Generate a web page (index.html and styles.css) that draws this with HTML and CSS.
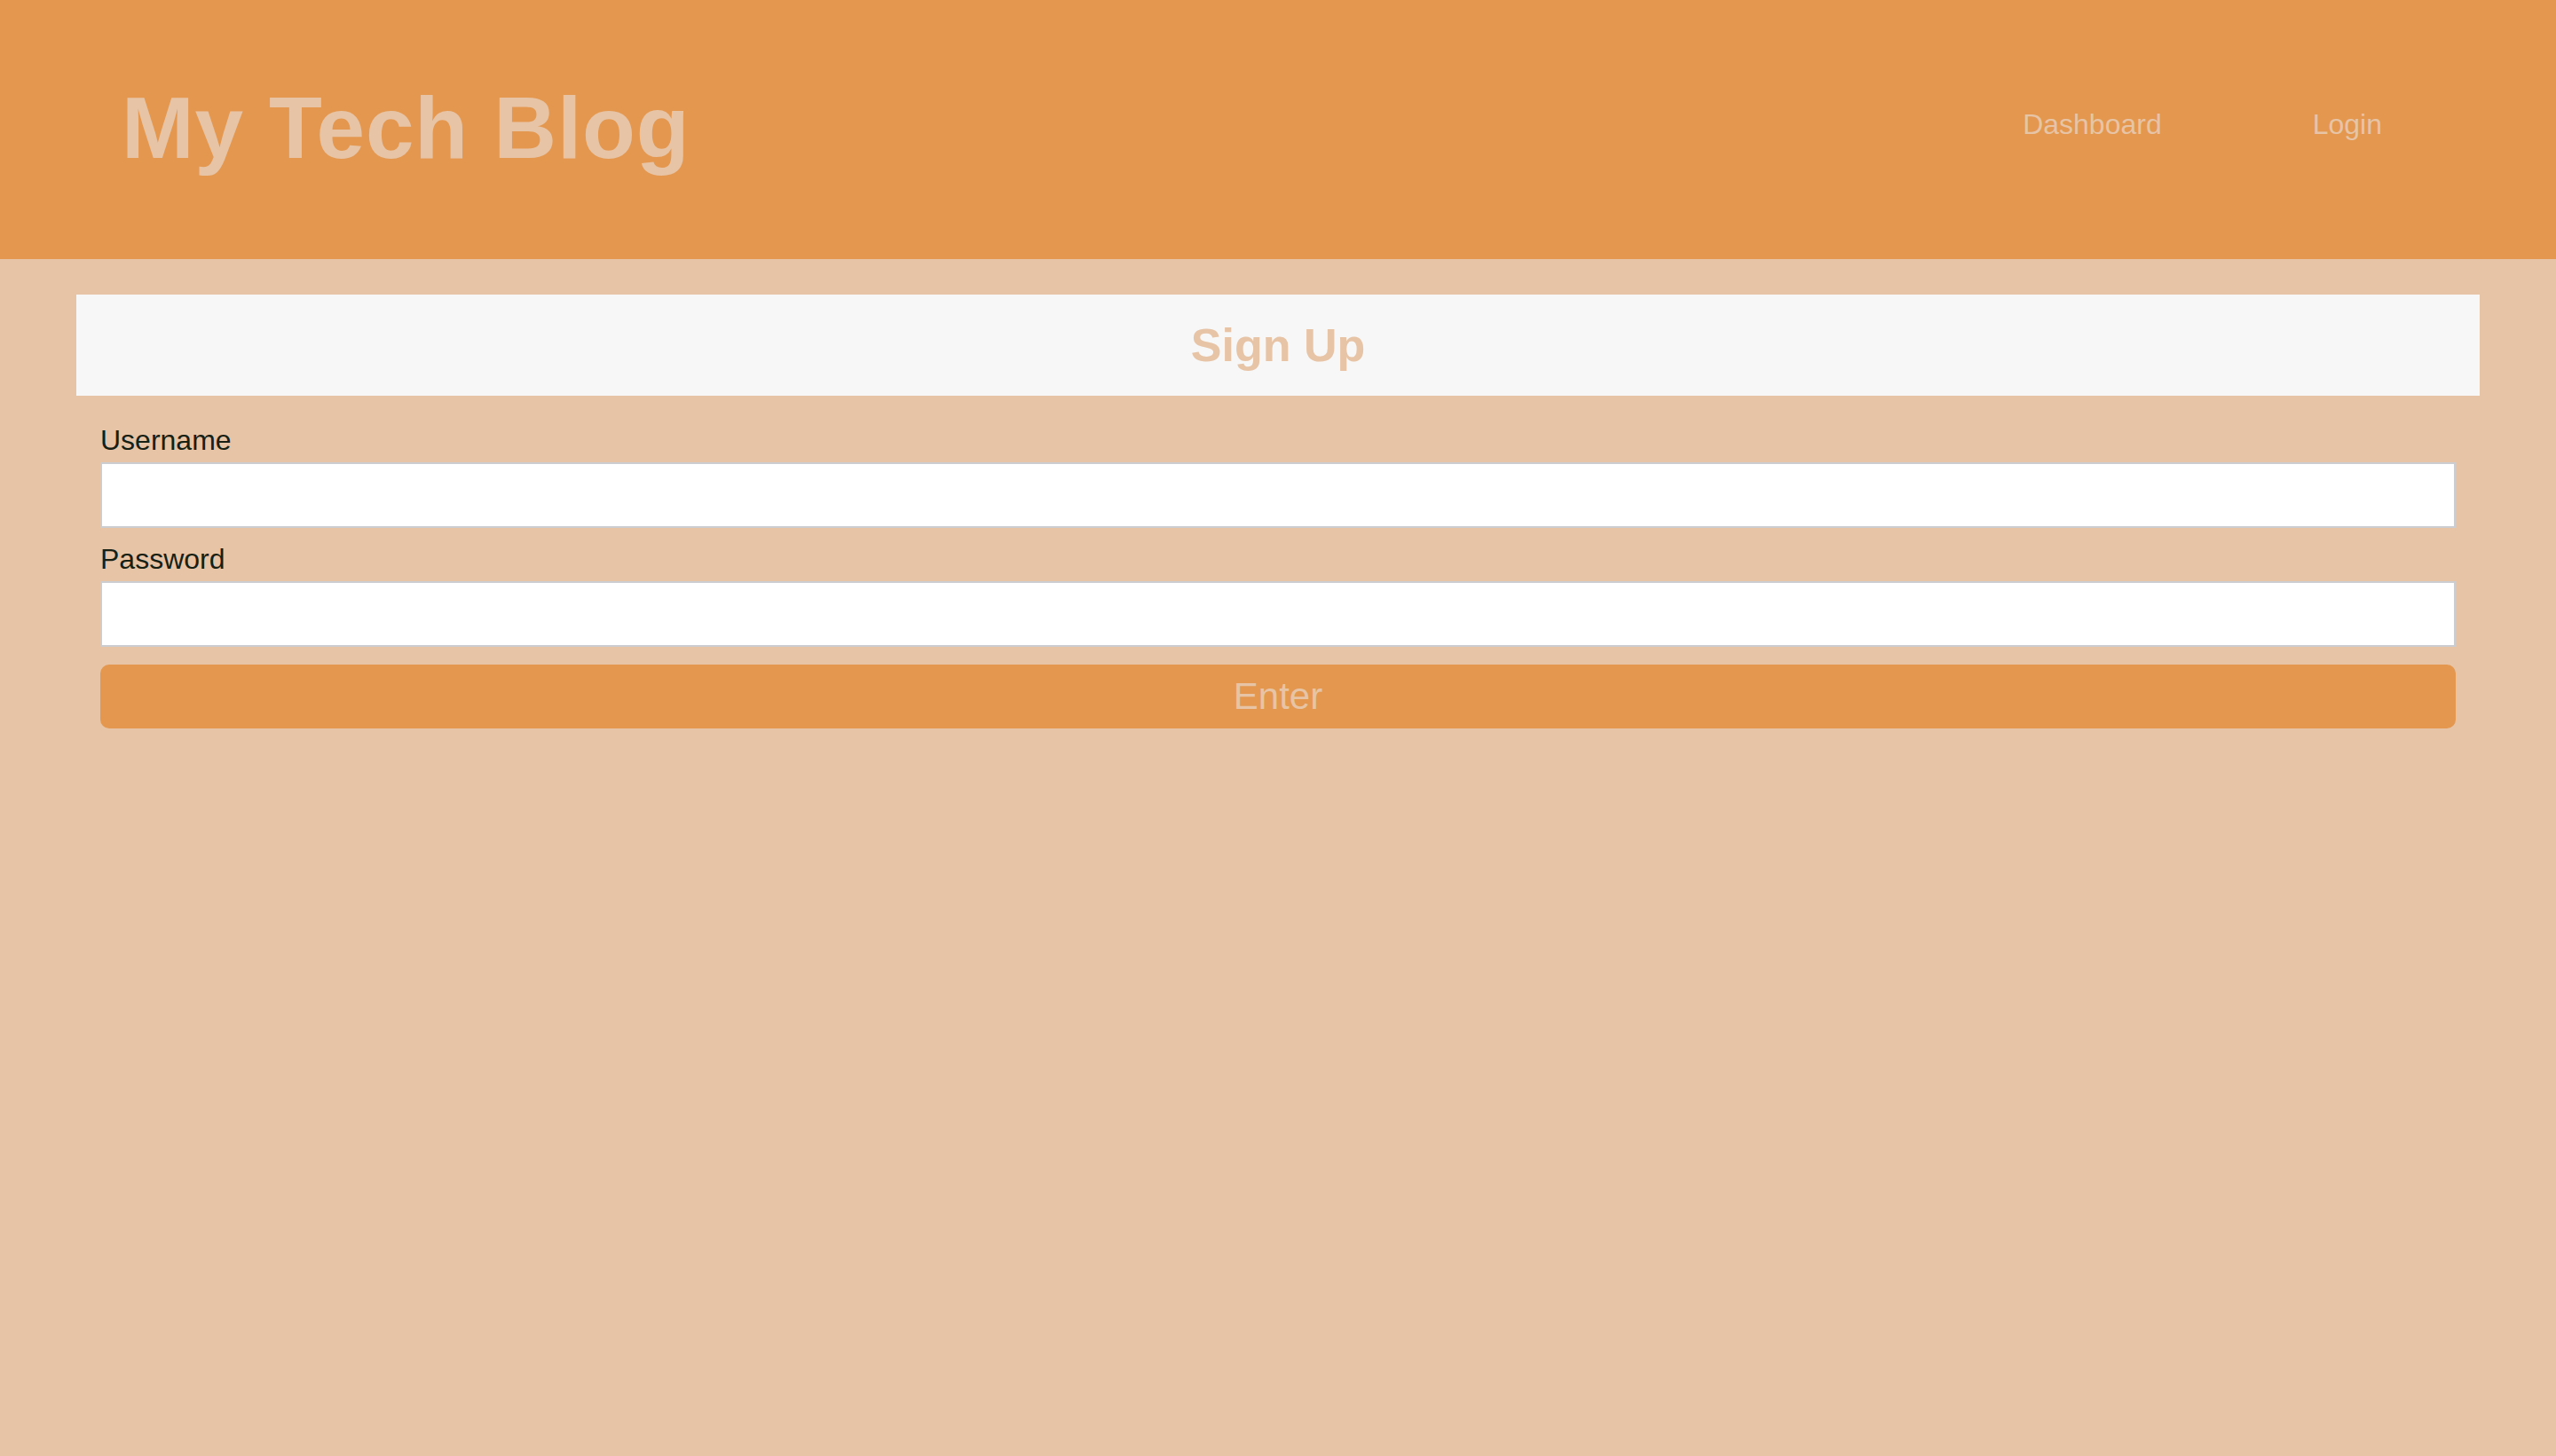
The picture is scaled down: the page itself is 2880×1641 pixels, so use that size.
FILE: index.html
```html
<!DOCTYPE html>
<html lang="en">
<head>
<meta charset="utf-8">
<title>My Tech Blog</title>
<link rel="stylesheet" href="styles.css">
</head>
<body>
<header class="site-header">
  <h1 class="site-title">My Tech Blog</h1>
  <nav class="site-nav">
    <a class="nav-link" href="#">Dashboard</a>
    <a class="nav-link" href="#">Login</a>
  </nav>
</header>
<main class="content">
  <div class="card-title">
    <h2 class="card-heading">Sign Up</h2>
  </div>
  <form class="signup-form">
    <label class="field-label" for="username">Username</label>
    <input class="field-input" id="username" type="text">
    <label class="field-label" for="password">Password</label>
    <input class="field-input" id="password" type="password">
    <button class="submit-btn" type="button">Enter</button>
  </form>
</main>
</body>
</html>
```

FILE: styles.css
```css
html, body {
  margin: 0;
  padding: 0;
}
html {
  background: #e7c4a6;
}
body {
  background: #e7c4a6;
  font-family: "Liberation Sans", Arial, sans-serif;
}
.site-header {
  display: flex;
  justify-content: space-between;
  align-items: flex-start;
  height: 292px;
  box-sizing: border-box;
  padding: 0 196px 0 137px;
  background: #e4974e;
}
.site-title {
  margin: 88px 0 0 0;
  font-size: 98px;
  line-height: 112px;
  font-weight: 700;
  letter-spacing: 0.9px;
  color: #e7c4a6;
}
.site-nav {
  display: flex;
  gap: 170px;
  margin-top: 122px;
}
.nav-link {
  font-size: 32px;
  line-height: 37px;
  color: #e7c4a6;
  text-decoration: none;
}
.content {
  padding: 40px 86px 0 86px;
}
.card-title {
  height: 114px;
  background: #f7f7f7;
  display: flex;
  align-items: center;
  justify-content: center;
}
.card-heading {
  margin: 0;
  font-size: 52px;
  line-height: 60px;
  font-weight: 700;
  color: #e7c4a6;
}
.signup-form {
  display: flex;
  flex-direction: column;
  margin: 32px 27px 0 27px;
}
.field-label {
  display: block;
  font-size: 32px;
  line-height: 37px;
  color: #172012;
  margin-bottom: 6px;
}
.field-input {
  height: 74px;
  box-sizing: border-box;
  border: 2px solid #cbcdd0;
  background: #ffffff;
  margin: 0 0 17px 0;
  padding: 0 10px;
  font-size: 28px;
}
.submit-btn {
  margin-top: 3px;
  height: 72px;
  border: none;
  border-radius: 10px;
  background: #e4974e;
  color: #e7c4a6;
  font-family: "Liberation Sans", Arial, sans-serif;
  font-size: 42px;
  line-height: 72px;
  padding: 0;
}
```
